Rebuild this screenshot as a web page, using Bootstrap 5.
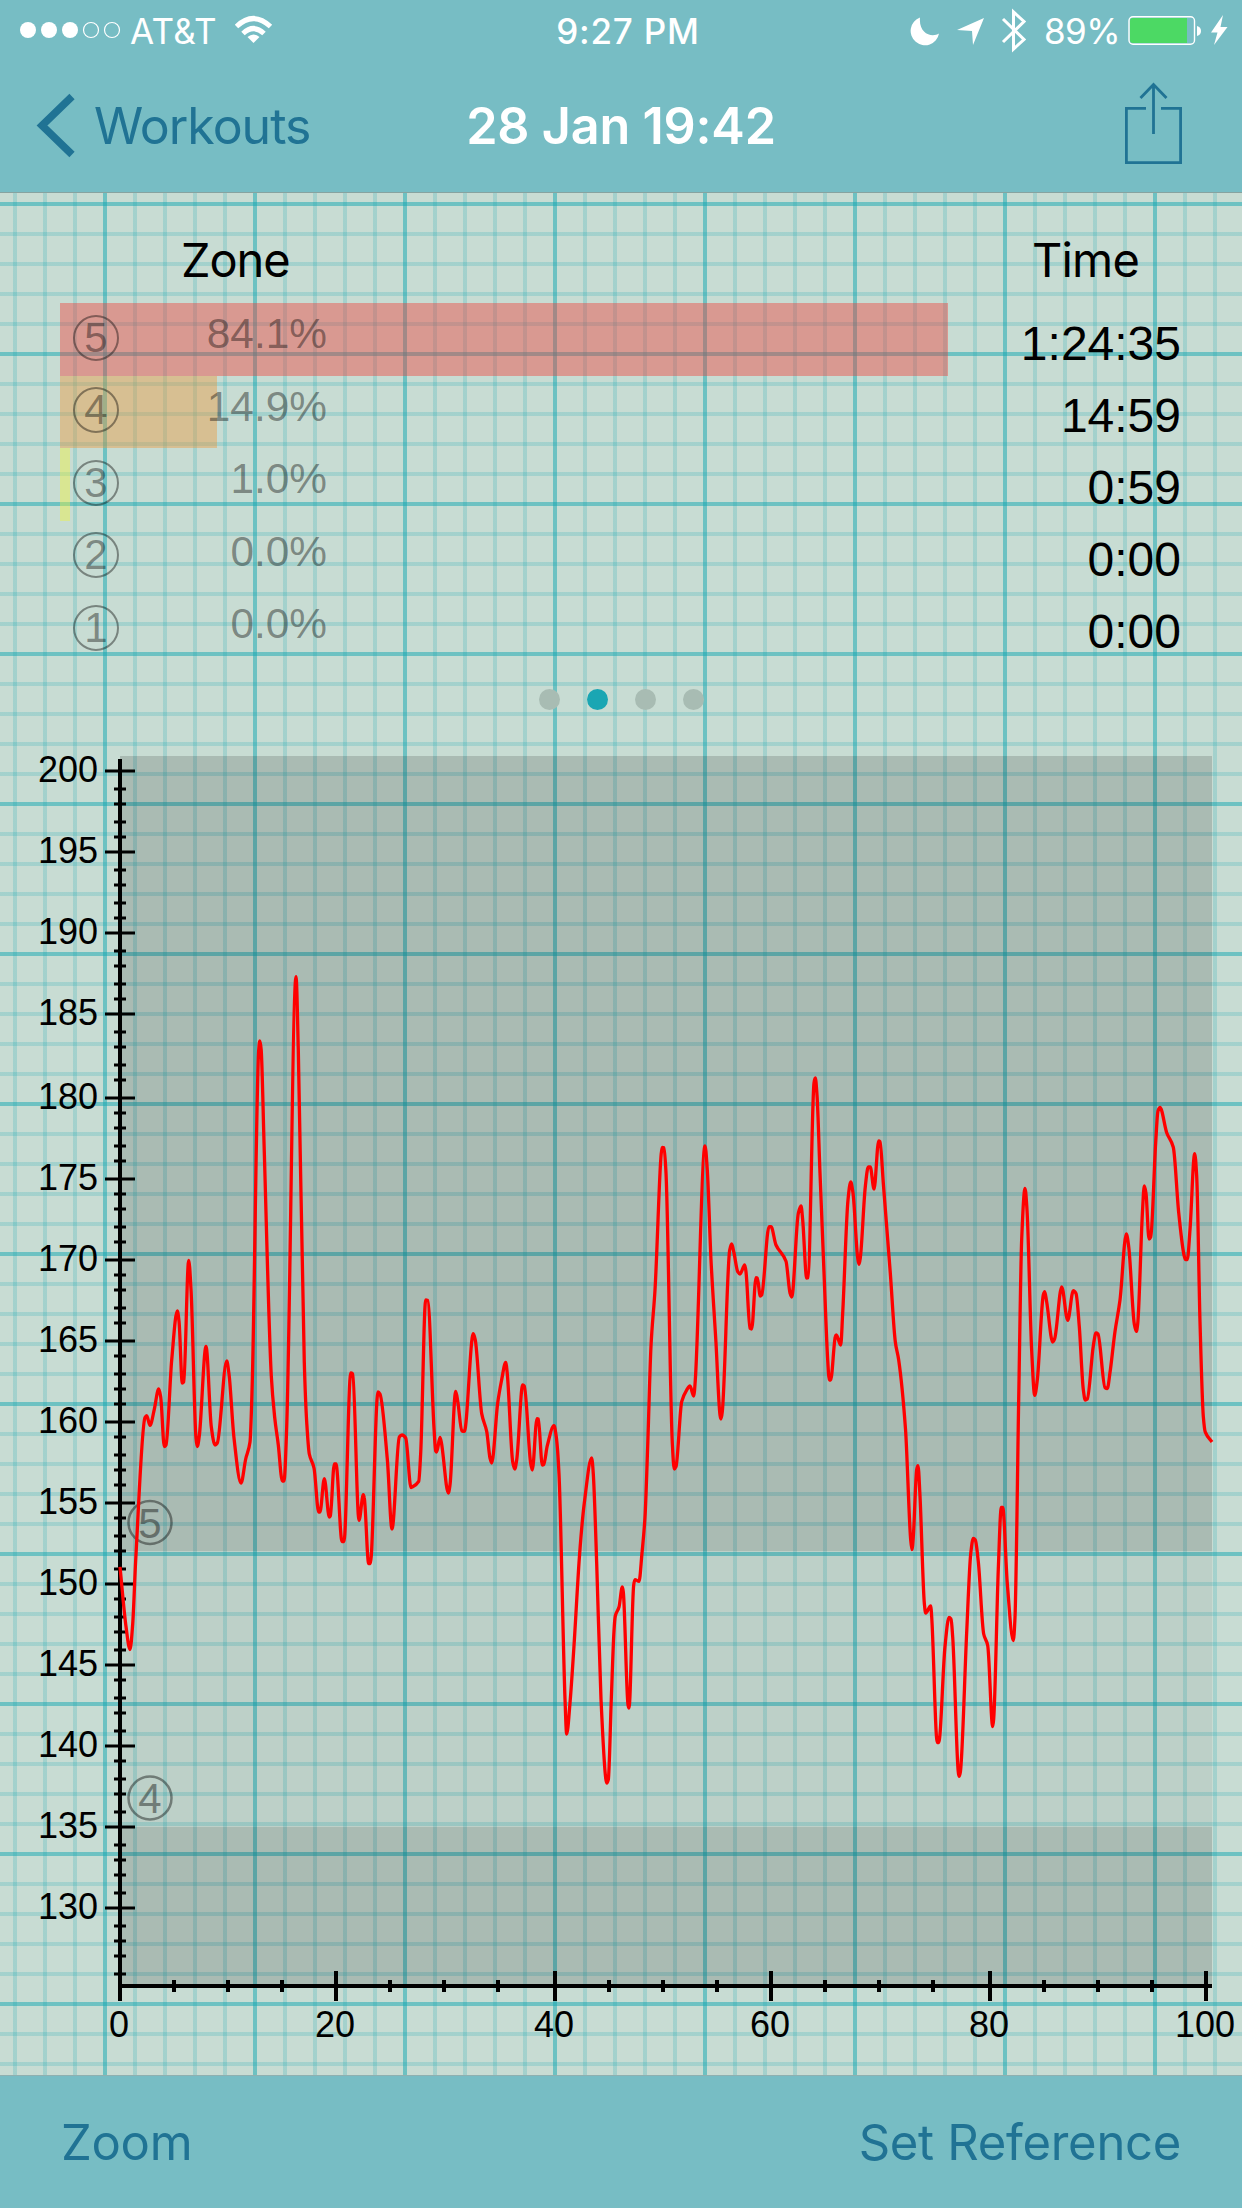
<!DOCTYPE html>
<html lang="en">
<head>
<meta charset="utf-8">
<meta name="viewport" content="width=device-width, initial-scale=1">
<title>28 Jan 19:42</title>
<link href="https://cdn.jsdelivr.net/npm/bootstrap@5.3.0/dist/css/bootstrap.min.css" rel="stylesheet">
<style>
:root{--bar:#77bdc4;--ink:#207394;--minor:rgba(18,166,177,.2);--major:rgba(18,166,177,.5)}
body{margin:0;font-family:Inter,"Liberation Sans",sans-serif;color:#000;line-height:1}
svg{display:block;flex:none}
.screen{width:1242px;height:2208px;overflow:hidden;background-color:#c8dcd3;
background-image:
linear-gradient(90deg,transparent 13px,var(--minor) 13px 17px,transparent 17px 43px,var(--minor) 43px 47px,transparent 47px 73px,var(--minor) 73px 77px,transparent 77px 103px,var(--major) 103px 107px,transparent 107px 133px,var(--minor) 133px 137px,transparent 137px),
linear-gradient(180deg,transparent 22px,var(--minor) 22px 26px,transparent 26px 52px,var(--major) 52px 56px,transparent 56px 82px,var(--minor) 82px 86px,transparent 86px 112px,var(--minor) 112px 116px,transparent 116px 142px,var(--minor) 142px 146px,transparent 146px);
background-size:150px 150px}
.topbar{height:193px;background:var(--bar);border-bottom:1px solid #86a3a0}
.statusrow{height:60px;color:#fff;font-size:35px}
.statusrow>div,.navrow>div{flex:1 1 0}
.statusrow span{padding-top:2px}
.carrier{letter-spacing:.3px}
.clock{font-weight:500;letter-spacing:.8px;margin-right:2px}
.batt{letter-spacing:-.6px;margin-right:8px}
.navrow{height:132px;font-size:50px;color:var(--ink)}
.backlabel{letter-spacing:-1px}
.navtitle{color:#fff;font-weight:600;font-size:50.3px;letter-spacing:-.2px;white-space:nowrap}
.shareicon{margin-bottom:3px}
.helv{font-family:"Liberation Sans",Arial,sans-serif}
.zones{height:467px}
.zonecol{padding:43px 0 0 60px}
.heading{font-size:47px;height:67px;letter-spacing:-.8px}
.zonehead{padding-left:121px;letter-spacing:-1.1px}
.zonerow{height:72.6px;padding-left:13px}
.zonerow>span{position:relative}
.fillbar{height:72.6px;top:0;left:0}
.digitring{width:46px;height:46px;margin-top:11.5px;border:2.5px solid rgba(0,0,0,.4);border-radius:50%;font-size:42px;color:rgba(0,0,0,.4)}
.pct{font-size:42.4px;color:rgba(0,0,0,.4);width:208px;padding-top:10px}
.timecol{width:300px;font-size:48px;padding:43px 61px 0 0}
.timecol .helv{height:72px;line-height:72px}
.timehead{height:71.5px;padding-right:42px}
.pager{height:79px;gap:27px}
.pager i{width:21px;height:21px;border-radius:50%;background:#a8bcb3}
.pager i.on{background:#1aa6b3}
.bottombar{height:133px;background:var(--bar);border-top:1px solid #8fb0b0;color:var(--ink);font-size:49px;padding:0 61px;letter-spacing:-.3px}
</style>
</head>
<body>
<div class="screen d-flex flex-column">
<header class="topbar flex-shrink-0">
<div class="statusrow d-flex align-items-center">
<div class="d-flex align-items-center ps-3">
<svg width="110" height="20" viewBox="16 20 110 20"><g fill="#fff"><circle cx="28" cy="30" r="8"/><circle cx="49" cy="30" r="8"/><circle cx="70" cy="30" r="8"/></g><g fill="none" stroke="#fff" stroke-width="1.2"><circle cx="91" cy="30" r="7.5"/><circle cx="112" cy="30" r="7.5"/></g></svg>
<span class="carrier ms-1">AT&amp;T</span>
<svg class="ms-3" width="40" height="30" viewBox="232 15 40 30"><g fill="none" stroke="#fff" stroke-width="5"><path d="M235.5 26.5Q252.500 10.500 269.500 26.500"/><path d="M242 33.500Q252.500 23.500 263 33.500"/></g><path d="M252.500 43L246.500 37Q252.500 32 258.500 37Z" fill="#fff"/></svg>
</div>
<span class="clock">9:27 PM</span>
<div class="d-flex align-items-center justify-content-end">
<svg width="136" height="46" viewBox="908 7 136 46" fill="#fff"><path d="M920 17.500A14.300 14.300 0 1 0 939 33.500C932 38 918.500 34 920 17.500Z"/><path d="M984 18L957 30L972 31L973 45Z"/><path d="M1003 19L1024 39.500L1013.500 49V12L1024 21.500L1003 42" fill="none" stroke="#fff" stroke-width="3"/></svg>
<span class="batt">89%</span>
<svg width="114" height="46" viewBox="1128 7 114 46"><rect x="1129" y="16.700" width="65.500" height="27.600" rx="4" fill="none" stroke="#fff" stroke-width="1.400"/><path d="M1133 18H1187V43H1133Q1130 43 1130 40V21Q1130 18 1133 18Z" fill="#4cd964"/><path d="M1197 26Q1201 27 1201 31T1197 36Z" fill="#fff"/><path d="M1223 15L1211 32.500H1217.500L1214 45L1227.500 27H1220.500Z" fill="#fff"/></svg>
</div>
</div>
<nav class="navrow d-flex align-items-center">
<div class="d-flex align-items-center">
<svg width="94" height="70" viewBox="0 92 94 70"><path d="M72 97.500L42 126.500L72 155.500" fill="none" stroke="#207394" stroke-width="7.500"/></svg>
<span class="backlabel">Workouts</span>
</div>
<span class="navtitle">28 Jan 19:42</span>
<div class="d-flex justify-content-end">
<svg class="shareicon" width="120" height="90" viewBox="1122 79 120 90" fill="none" stroke="#207394" stroke-width="2.800"><path d="M1146 107.400H1126.400V161.600H1180.600V107.400H1161M1153.500 133V84M1140.500 97L1153.500 83.500L1166.500 97"/></svg>
</div>
</nav>
</header>

<section class="zones d-flex justify-content-between flex-shrink-0">
<div id="zones" class="zonecol flex-grow-1 d-flex flex-column">
<div class="heading flex-shrink-0"><span class="zonehead">Zone</span></div>
</div>
<div class="timecol d-flex flex-column align-items-end" id="times"></div>
</section>
<div class="pager d-flex justify-content-center align-items-center flex-shrink-0"><i></i><i class="on"></i><i></i><i></i></div>
<main class="flex-grow-1"><svg id="chart" width="1242" height="1336" viewBox="0 739 1242 1336"></svg></main>
<footer class="bottombar d-flex justify-content-between align-items-center flex-shrink-0"><span>Zoom</span><span>Set Reference</span></footer>
</div>
<script src="https://cdn.jsdelivr.net/npm/bootstrap@5.3.0/dist/js/bootstrap.bundle.min.js"></script>
<script>
var zones=[[5,'84.1%',888,'242,52,48','1:24:35'],[4,'14.9%',157,'237,147,50','14:59'],[3,'1.0%',10,'242,245,50','0:59'],[2,'0.0%',0,'0,0,0','0:00'],[1,'0.0%',0,'0,0,0','0:00']];
document.getElementById('zones').insertAdjacentHTML('beforeend',zones.map(function(z){
return '<div class="zonerow position-relative d-flex flex-shrink-0"><div class="fillbar position-absolute" style="width:'+z[2]+'px;background:rgba('+z[3]+',.4)"></div><span class="digitring helv d-flex align-items-center justify-content-center">'+z[0]+'</span><span class="pct helv text-end">'+z[1]+'</span></div>'}).join(''));
document.getElementById('times').innerHTML='<div class="heading timehead flex-shrink-0">Time</div>'+zones.map(function(z){return '<div class="helv flex-shrink-0">'+z[4]+'</div>'}).join('');

// Heart-rate trace, in chart units
var pts=[120,1566.8,126,1626.5,130,1649.5,132.7,1624,135.7,1560,145,1417.5,146.7,1415.7,150,1425.4,154.3,1409.3,158.7,1389,160.7,1397,164.3,1446.5,166,1445,171.7,1360,177.3,1311,179,1321,182.3,1383,183.7,1382,188.7,1260.5,191,1289,196,1438,197.3,1446.5,199.3,1436,206,1346.4,211.3,1426.7,215,1445,217.3,1443,226.7,1361,229,1374,234,1438,241,1483,245.7,1459,250,1442,252.3,1381,258.7,1050,259.9,1041,261.2,1050,264,1142,271.3,1376,274.7,1417.5,278.3,1445,282.3,1481,284,1481,286.7,1427,296,976.7,298.3,1050,304.3,1362.5,306.7,1422,309.3,1454,314,1468,318.7,1512,320,1512,324.3,1478.6,329.3,1517,330.3,1516,334.3,1464,336,1464,342,1541.5,344,1541.5,350.7,1373,352.7,1374,359,1520.4,363.3,1494.7,364.3,1498,368.7,1563.6,370.3,1563.6,378,1392,380,1394,387.3,1459,392,1529,399.3,1437,402,1435,405.7,1438,411,1487.5,412.3,1487,418.7,1481.4,420.7,1453,425.7,1300,427.7,1300.4,434,1428,435.7,1451,436.7,1452,440,1437.5,441.3,1442,448.3,1493,450,1485,455.7,1391.4,458,1403,461.7,1430.7,464.3,1431.4,473.3,1333.6,475.3,1340,481.7,1413.6,486.7,1431.4,490,1458,491.7,1463,497.7,1403,501.7,1379.6,505.7,1362.5,507.3,1374,512.7,1462,514.7,1469,516.7,1460,522.7,1385,524.3,1386,530.7,1463.6,532.3,1470,537,1418.6,538.3,1419,542.3,1465,543.7,1464.6,547.3,1445.7,554,1425.7,556.3,1437,559,1474,565,1699,566.7,1734,570,1703,574,1645.7,579.7,1553,584.3,1503,591.7,1458,593.3,1474,596.7,1563.6,601,1699,605.7,1778,606.7,1783,608.3,1779.6,611.3,1699,614,1631,615.3,1616,619,1607,622.3,1587,623.3,1592,628,1704.6,629,1708,633.7,1585,635,1579.6,639,1581.4,642,1553,645,1517,647.7,1446,651,1346,655,1290,662.3,1147.3,664,1147.7,666,1173,672.3,1443,674.3,1469,676,1466.7,681.7,1401.7,686.7,1390,690,1386,693.7,1396,695.3,1380,705,1146,707.3,1170,711,1260,716,1343,720,1415,721,1419,722.3,1411.7,729.7,1250,731.7,1244,734,1253,737.7,1271.7,740,1274,744.7,1265,746,1271.7,750,1328.3,751.7,1329,756,1277.7,757.3,1278,760.3,1296,761.7,1295,769,1226.7,771,1226.7,776,1245,786,1261.3,790,1293,791.7,1297,798.3,1213.3,801,1206,802.7,1220,806.7,1278,808,1277.7,814,1083,815.3,1078,817,1095,820,1173,824.3,1280,827.7,1360,829.3,1380,830.7,1380,835.3,1336.7,836.3,1335,840.7,1345,842.7,1313,848,1200,850.7,1182,853,1193,857.7,1258,859,1264.3,860.3,1258,865.3,1186.7,868.3,1167,870.3,1167,874,1189,878.7,1141,880,1141.7,883.3,1183,890.3,1273,895.3,1341.7,898.7,1360,905.5,1429,910.7,1540,912,1549.5,913.3,1537,916.7,1469.6,918,1465.7,920,1496,924.3,1603,925.7,1613,930.7,1606,931.7,1617,937.3,1742.5,938.7,1742.5,945,1646.5,949,1617.4,951,1619,952.7,1637,959,1776.4,960.3,1772.5,966.7,1632,970.7,1554,973.3,1538.4,975.3,1540,978.3,1561.7,983.7,1634,987.7,1645.5,992.7,1726.5,993.7,1719,998.3,1569,1001.3,1507.4,1002.7,1507.4,1007.3,1583.5,1013.3,1640.7,1015,1617.4,1018.7,1399,1021.7,1239,1025,1188.4,1027,1210,1031.7,1351,1034.7,1395.4,1037.3,1380,1043.3,1295,1044.7,1291.7,1046.7,1302,1052.7,1342,1054.7,1338.7,1061.7,1286.8,1067.7,1320.3,1073.3,1290.7,1076,1293.6,1079.3,1326.6,1083.3,1389.6,1085.3,1400,1087.3,1399,1093.3,1346,1096,1333,1098,1334,1105,1387.7,1107.3,1388.6,1110,1372.6,1115,1331.4,1120,1300,1126.3,1234,1128.7,1246.6,1134.3,1324,1136.3,1331.4,1137.7,1324,1142.3,1215,1144.3,1186,1146,1193.3,1149,1239,1150.7,1237,1155.7,1142.4,1158,1111,1160,1107.5,1166.7,1132.7,1173.3,1147.2,1178.7,1212.7,1184.3,1256.3,1185.7,1259.7,1187.3,1259.7,1190,1229.6,1194.7,1153.6,1196.7,1176.3,1200,1321.7,1203.3,1416.3,1205.3,1432.2,1212,1442];
// Monotone cubic through the samples keeps every peak at its own value
var n=pts.length/2,X=[],Y=[],S=[],M=[],i;
for(i=0;i<n;i++){X.push(pts[2*i]);Y.push(pts[2*i+1])}
for(i=0;i<n-1;i++)S.push((Y[i+1]-Y[i])/(X[i+1]-X[i]));
M.push(S[0]);
for(i=1;i<n-1;i++)M.push(S[i-1]*S[i]<=0?0:2*S[i-1]*S[i]/(S[i-1]+S[i]));
M.push(S[n-2]);
var d='M'+X[0]+' '+Y[0];
for(i=0;i<n-1;i++){var h=(X[i+1]-X[i])/3;d+='C'+[X[i]+h,Y[i]+M[i]*h,X[i+1]-h,Y[i+1]-M[i+1]*h,X[i+1],Y[i+1]].map(function(v){return v.toFixed(1)}).join(' ')}

var s='<g fill="#000"><rect x="120" y="756" width="1092" height="795" opacity=".15"/><rect x="120" y="1551" width="1092" height="276" opacity=".05"/><rect x="120" y="1827" width="1092" height="159" opacity=".15"/></g><g fill="#000" font-family="Liberation Sans, Arial, sans-serif" font-size="36">';
for(var v=0;v<75;v++){var y=Math.ceil((770.3+v*16.24)/3)*3,big=v%5==0;
s+='<rect x="'+(big?105:114)+'" y="'+(y-1.5)+'" width="'+(big?30:12)+'" height="3"/>';
if(big&&v<=70)s+='<text x="98" y="'+(y+10.5)+'" text-anchor="end">'+(200-v)+'</text>';}
s+='<rect x="118" y="759" width="4" height="1242"/><rect x="118" y="1984" width="1094" height="4"/>';
for(v=0;v<=100;v+=5){var x=Math.floor((120+v*10.875)/3)*3,b=v%20==0;
s+='<rect x="'+(x-2)+'" y="'+(b?1971:1980)+'" width="4" height="'+(b?30:12)+'"/>';
if(b)s+='<text x="'+(x-1)+'" y="2037" text-anchor="middle">'+v+'</text>';}
s+='</g>';
[[5,1522.5],[4,1798]].forEach(function(c){s+='<g opacity=".4"><circle cx="150" cy="'+c[1]+'" r="21.500" fill="none" stroke="#000" stroke-width="2.500"/><text x="150" y="'+(c[1]+15)+'" text-anchor="middle" font-family="Liberation Sans, Arial, sans-serif" font-size="42">'+c[0]+'</text></g>'});
s+='<path d="'+d+'" fill="none" stroke="#f00" stroke-width="3.300" stroke-linejoin="round"/>';
document.getElementById('chart').innerHTML=s;
</script>
</body>
</html>
